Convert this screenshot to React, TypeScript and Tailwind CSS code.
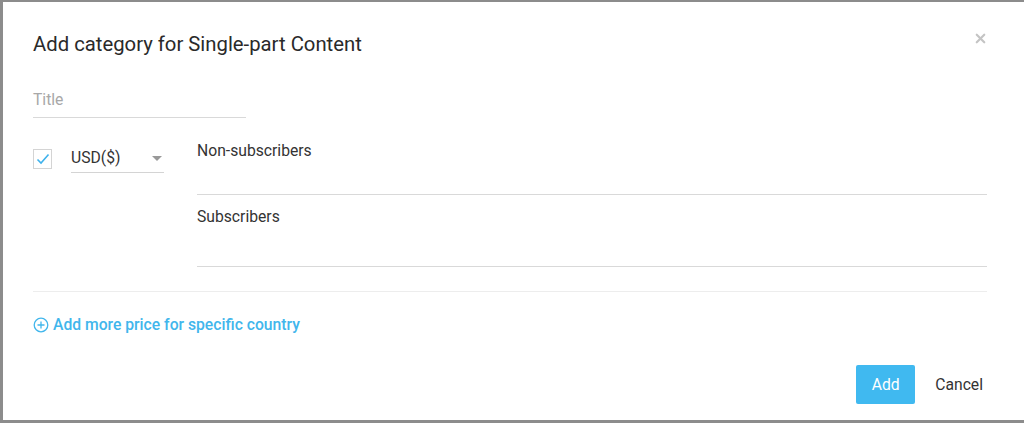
import { X } from "lucide-react";

function PlusCircle() {
  return (
    <svg width="16" height="16" viewBox="0 0 16 16" fill="none" stroke="#41b6ec" strokeWidth="1.3">
      <circle cx="8" cy="8" r="6.8" />
      <path d="M8 4.5v7M4.5 8h7" />
    </svg>
  );
}

export default function App() {
  return (
    <div className="w-[1024px] h-[423px] bg-white font-['Roboto',sans-serif] text-[#333]">
      <div className="h-full border-l-[3px] border-t-2 border-b-[3px] border-[#8c8c8c] relative">
        <X className="absolute right-[36px] top-[29px] text-[#c4c4c4]" size={15} strokeWidth={3.5} />
        <div className="pl-[30px] pr-[37px]">
          <h2 className="text-[20.3px] leading-7 pt-[28px] text-[#2a2a2a]">Add category for Single-part Content</h2>

          <div className="mt-[31px] w-[213px] border-b border-[#d9d9d9] pb-[6px] text-[15.7px] leading-[22px] text-[#a8a8a8]">
            Title
          </div>

          <div className="flex mt-[22px]">
            <div className="flex pt-[9px]">
              <div className="w-[19px] h-[20px] border border-[#d4d4d4] flex items-center justify-center">
                <svg width="14" height="12" viewBox="0 0 14 12" fill="none" stroke="#3fb2ec" strokeWidth="1.6">
                  <path d="M1.5 6.5l3.5 3.5L12.5 1.5" />
                </svg>
              </div>
              <div className="ml-[19px] w-[93px] h-[24px] border-b border-[#d4d4d4] flex items-start justify-between">
                <span className="text-[15.7px] leading-[22px] -mt-[2px] text-[#333]">USD($)</span>
                <span className="mt-[7px] mr-[2px] w-0 h-0 border-l-[5px] border-r-[5px] border-t-[5px] border-l-transparent border-r-transparent border-t-[#999]" />
              </div>
            </div>

            <div className="flex-1 ml-[33px]">
              <div className="h-[55px] border-b border-[#d9d9d9] text-[15.7px] leading-[22px] text-[#333]">Non-subscribers</div>
              <div className="mt-[11px] h-[61px] border-b border-[#d9d9d9] text-[15.7px] leading-[22px] text-[#333]">Subscribers</div>
            </div>
          </div>

          <div className="mt-[24px] border-t border-[#ededed]" />

          <div className="mt-[22px] flex items-center gap-[4px] text-[#41b6ec] text-[15.7px] leading-[22px] font-medium">
            <PlusCircle />
            <span>Add more price for specific country</span>
          </div>

          <div className="mt-[29px] flex justify-end items-center">
            <button className="w-[59px] h-[39px] rounded-[2px] bg-[#40b9f0] text-white text-[15.7px]">Add</button>
            <button className="ml-[20px] mr-[4px] text-[15.7px] text-[#333]">Cancel</button>
          </div>
        </div>
      </div>
    </div>
  );
}
